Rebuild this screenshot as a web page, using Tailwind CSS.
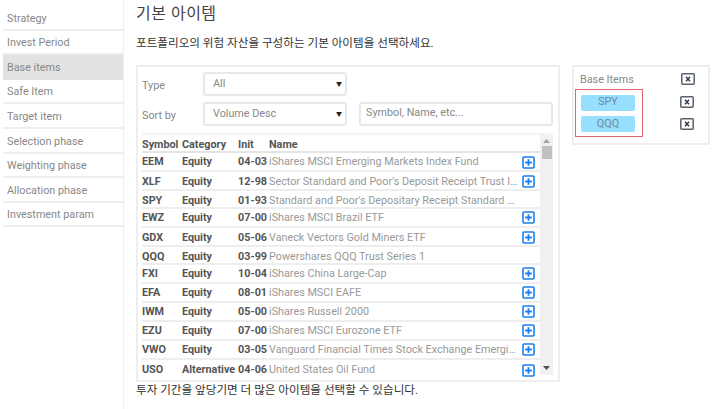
<!DOCTYPE html>
<html lang="ko">
<head>
  <meta charset="UTF-8">
  <title>기본 아이템</title>
  <script src="https://cdn.jsdelivr.net/npm/@tailwindcss/browser@4"></script>
</head>
<body class="bg-white font-['Roboto','Noto_Sans_CJK_KR',sans-serif] text-[10.8px]">
  <div class="flex h-[409px] w-[720px] overflow-hidden">
    <!-- Sidebar -->
    <nav class="ml-[3px] w-[121px] shrink-0 border-r border-[#eeeeee] pt-[6px] text-[#888888]">
      <div class="flex h-[24.6px] items-center border-b-2 border-[#eeeeee] pl-[4px] pt-[3px]">Strategy</div>
      <div class="flex h-[24.6px] items-center border-b-2 border-[#eeeeee] pl-[4px] pt-[3px]">Invest Period</div>
      <div class="flex h-[24.6px] items-center bg-[#e2e2e2] pl-[4px] pt-[2px]">Base items</div>
      <div class="flex h-[24.6px] items-center border-b-2 border-[#eeeeee] pl-[4px] pt-[3px]">Safe Item</div>
      <div class="flex h-[24.6px] items-center border-b-2 border-[#eeeeee] pl-[4px] pt-[3px]">Target item</div>
      <div class="flex h-[24.6px] items-center border-b-2 border-[#eeeeee] pl-[4px] pt-[3px]">Selection phase</div>
      <div class="flex h-[24.6px] items-center border-b-2 border-[#eeeeee] pl-[4px] pt-[3px]">Weighting phase</div>
      <div class="flex h-[24.6px] items-center border-b-2 border-[#eeeeee] pl-[4px] pt-[3px]">Allocation phase</div>
      <div class="flex h-[24.6px] items-center border-b-2 border-[#eeeeee] pl-[4px] pt-[3px]">Investment param</div>
    </nav>

    <!-- Main -->
    <main class="ml-[12px] flex w-[424px] shrink-0 flex-col">
      <h1 class="flex h-[27px] items-center text-[16px] leading-none tracking-[0.5px] text-[#444444]">기본 아이템</h1>
      <p class="mt-[9px] h-[14px] text-[11.6px] leading-[14px] text-[#333333]">포트폴리오의 위험 자산을 구성하는 기본 아이템을 선택하세요.</p>
      <section class="mt-[15px] h-[317px] border-2 border-[#eeeeee] pl-[4px] pr-[5px] pt-[5px]">
        <div class="flex h-[23px] items-center">
          <span class="w-[61px] pt-[5px] text-[#888888]">Type</span>
          <div class="flex h-[24px] w-[144px] items-center justify-between rounded-[3px] border-2 border-[#e8e8e8] pl-[8px] pr-[3px] text-[#888888]">
            <span class="pt-[1px]">All</span>
            <span class="text-[6px] text-[#222222]">▼</span>
          </div>
        </div>
        <div class="mt-[7px] flex h-[23px] items-center">
          <span class="w-[61px] pt-[5px] text-[#888888]">Sort by</span>
          <div class="flex h-[24px] w-[144px] items-center justify-between rounded-[3px] border-2 border-[#e8e8e8] pl-[8px] pr-[3px] text-[#888888]">
            <span class="pt-[1px]">Volume Desc</span>
            <span class="text-[6px] text-[#222222]">▼</span>
          </div>
          <div class="ml-[12px] flex h-[24px] w-[194px] items-center rounded-[3px] border-2 border-[#e8e8e8] pl-[5px] text-[#888888]">Symbol, Name, etc...</div>
        </div>
        <div class="mt-[8px] h-[2px] w-[411px] bg-[#f4f4f4]"></div>
        <div class="flex h-[240px] w-[411px]">
          <div class="w-[398px]">
            <div class="flex h-[18px] items-center border-b-2 border-[#e4e4e4] pt-[4px] font-bold text-[#555555]">
              <span class="w-[40px]">Symbol</span><span class="w-[56px]">Category</span><span class="w-[31px]">Init</span><span>Name</span>
            </div>
            <div class="flex h-[19.1px] items-center border-b-2 border-[#eeeeee] pt-[1px]">
              <span class="w-[40px] font-bold text-[#555555]">EEM</span><span class="w-[56px] font-bold text-[#555555]">Equity</span><span class="w-[31px] font-bold text-[#555555]">04-03</span><span class="w-[250px] truncate text-[#999999]">iShares MSCI Emerging Markets Index Fund</span>
              <svg class="ml-[3px]" width="13" height="13" viewBox="0 0 13 13" fill="none"><rect x="1" y="1" width="11" height="11" rx="1" stroke="#1a7ff0" stroke-width="1.6"/><path d="M3.2 6.5h6.6M6.5 3.2v6.6" stroke="#1a7ff0" stroke-width="1.8"/></svg>
            </div>
            <div class="flex h-[19.1px] items-center border-b-2 border-[#eeeeee] pt-[2px]">
              <span class="w-[40px] font-bold text-[#555555]">XLF</span><span class="w-[56px] font-bold text-[#555555]">Equity</span><span class="w-[31px] font-bold text-[#555555]">12-98</span><span class="w-[250px] truncate text-[#999999]">Sector Standard and Poor's Deposit Receipt Trust Industrial</span>
              <svg class="ml-[3px]" width="13" height="13" viewBox="0 0 13 13" fill="none"><rect x="1" y="1" width="11" height="11" rx="1" stroke="#1a7ff0" stroke-width="1.6"/><path d="M3.2 6.5h6.6M6.5 3.2v6.6" stroke="#1a7ff0" stroke-width="1.8"/></svg>
            </div>
            <div class="flex h-[17.6px] items-center border-b-2 border-[#eeeeee] pt-[4px]">
              <span class="w-[40px] font-bold text-[#555555]">SPY</span><span class="w-[56px] font-bold text-[#555555]">Equity</span><span class="w-[31px] font-bold text-[#555555]">01-93</span><span class="w-[250px] truncate text-[#999999]">Standard and Poor's Depositary Receipt Standard and Poor</span>
            </div>
            <div class="flex h-[19.1px] items-center border-b-2 border-[#eeeeee] pt-[1px]">
              <span class="w-[40px] font-bold text-[#555555]">EWZ</span><span class="w-[56px] font-bold text-[#555555]">Equity</span><span class="w-[31px] font-bold text-[#555555]">07-00</span><span class="w-[250px] truncate text-[#999999]">iShares MSCI Brazil ETF</span>
              <svg class="ml-[3px]" width="13" height="13" viewBox="0 0 13 13" fill="none"><rect x="1" y="1" width="11" height="11" rx="1" stroke="#1a7ff0" stroke-width="1.6"/><path d="M3.2 6.5h6.6M6.5 3.2v6.6" stroke="#1a7ff0" stroke-width="1.8"/></svg>
            </div>
            <div class="flex h-[19.1px] items-center border-b-2 border-[#eeeeee] pt-[3px]">
              <span class="w-[40px] font-bold text-[#555555]">GDX</span><span class="w-[56px] font-bold text-[#555555]">Equity</span><span class="w-[31px] font-bold text-[#555555]">05-06</span><span class="w-[250px] truncate text-[#999999]">Vaneck Vectors Gold Miners ETF</span>
              <svg class="ml-[3px]" width="13" height="13" viewBox="0 0 13 13" fill="none"><rect x="1" y="1" width="11" height="11" rx="1" stroke="#1a7ff0" stroke-width="1.6"/><path d="M3.2 6.5h6.6M6.5 3.2v6.6" stroke="#1a7ff0" stroke-width="1.8"/></svg>
            </div>
            <div class="flex h-[17.6px] items-center border-b-2 border-[#eeeeee] pt-[4px]">
              <span class="w-[40px] font-bold text-[#555555]">QQQ</span><span class="w-[56px] font-bold text-[#555555]">Equity</span><span class="w-[31px] font-bold text-[#555555]">03-99</span><span class="w-[250px] truncate text-[#999999]">Powershares QQQ Trust Series 1</span>
            </div>
            <div class="flex h-[19.1px] items-center border-b-2 border-[#eeeeee] pt-[1px]">
              <span class="w-[40px] font-bold text-[#555555]">FXI</span><span class="w-[56px] font-bold text-[#555555]">Equity</span><span class="w-[31px] font-bold text-[#555555]">10-04</span><span class="w-[250px] truncate text-[#999999]">iShares China Large-Cap</span>
              <svg class="ml-[3px]" width="13" height="13" viewBox="0 0 13 13" fill="none"><rect x="1" y="1" width="11" height="11" rx="1" stroke="#1a7ff0" stroke-width="1.6"/><path d="M3.2 6.5h6.6M6.5 3.2v6.6" stroke="#1a7ff0" stroke-width="1.8"/></svg>
            </div>
            <div class="flex h-[19.1px] items-center border-b-2 border-[#eeeeee] pt-[1px]">
              <span class="w-[40px] font-bold text-[#555555]">EFA</span><span class="w-[56px] font-bold text-[#555555]">Equity</span><span class="w-[31px] font-bold text-[#555555]">08-01</span><span class="w-[250px] truncate text-[#999999]">iShares MSCI EAFE</span>
              <svg class="ml-[3px]" width="13" height="13" viewBox="0 0 13 13" fill="none"><rect x="1" y="1" width="11" height="11" rx="1" stroke="#1a7ff0" stroke-width="1.6"/><path d="M3.2 6.5h6.6M6.5 3.2v6.6" stroke="#1a7ff0" stroke-width="1.8"/></svg>
            </div>
            <div class="flex h-[19.1px] items-center border-b-2 border-[#eeeeee] pt-[1px]">
              <span class="w-[40px] font-bold text-[#555555]">IWM</span><span class="w-[56px] font-bold text-[#555555]">Equity</span><span class="w-[31px] font-bold text-[#555555]">05-00</span><span class="w-[250px] truncate text-[#999999]">iShares Russell 2000</span>
              <svg class="ml-[3px]" width="13" height="13" viewBox="0 0 13 13" fill="none"><rect x="1" y="1" width="11" height="11" rx="1" stroke="#1a7ff0" stroke-width="1.6"/><path d="M3.2 6.5h6.6M6.5 3.2v6.6" stroke="#1a7ff0" stroke-width="1.8"/></svg>
            </div>
            <div class="flex h-[19.1px] items-center border-b-2 border-[#eeeeee] pt-[1px]">
              <span class="w-[40px] font-bold text-[#555555]">EZU</span><span class="w-[56px] font-bold text-[#555555]">Equity</span><span class="w-[31px] font-bold text-[#555555]">07-00</span><span class="w-[250px] truncate text-[#999999]">iShares MSCI Eurozone ETF</span>
              <svg class="ml-[3px]" width="13" height="13" viewBox="0 0 13 13" fill="none"><rect x="1" y="1" width="11" height="11" rx="1" stroke="#1a7ff0" stroke-width="1.6"/><path d="M3.2 6.5h6.6M6.5 3.2v6.6" stroke="#1a7ff0" stroke-width="1.8"/></svg>
            </div>
            <div class="flex h-[19.1px] items-center border-b-2 border-[#eeeeee] pt-[1px]">
              <span class="w-[40px] font-bold text-[#555555]">VWO</span><span class="w-[56px] font-bold text-[#555555]">Equity</span><span class="w-[31px] font-bold text-[#555555]">03-05</span><span class="w-[250px] truncate text-[#999999]">Vanguard Financial Times Stock Exchange Emerging Markets</span>
              <svg class="ml-[3px]" width="13" height="13" viewBox="0 0 13 13" fill="none"><rect x="1" y="1" width="11" height="11" rx="1" stroke="#1a7ff0" stroke-width="1.6"/><path d="M3.2 6.5h6.6M6.5 3.2v6.6" stroke="#1a7ff0" stroke-width="1.8"/></svg>
            </div>
            <div class="flex h-[19.1px] items-center pt-[1px]">
              <span class="w-[40px] font-bold text-[#555555]">USO</span><span class="w-[56px] whitespace-nowrap font-bold text-[#555555]">Alternative</span><span class="w-[31px] font-bold text-[#555555]">04-06</span><span class="w-[250px] truncate text-[#999999]">United States Oil Fund</span>
              <svg class="ml-[3px]" width="13" height="13" viewBox="0 0 13 13" fill="none"><rect x="1" y="1" width="11" height="11" rx="1" stroke="#1a7ff0" stroke-width="1.6"/><path d="M3.2 6.5h6.6M6.5 3.2v6.6" stroke="#1a7ff0" stroke-width="1.8"/></svg>
            </div>
          </div>
          <!-- scrollbar -->
          <div class="flex w-[13px] flex-col items-center bg-[#f1f1f1]">
            <svg class="mt-[4px]" width="7" height="4" viewBox="0 0 7 4"><path d="M3.5 0L7 4H0z" fill="#a3a3a3"/></svg>
            <div class="mt-[3px] h-[13px] w-[10px] bg-[#c1c1c1]"></div>
            <svg class="mt-auto mb-[5px]" width="7" height="4" viewBox="0 0 7 4"><path d="M0 0h7L3.5 4z" fill="#505050"/></svg>
          </div>
        </div>
      </section>
      <p class="h-[14px] pt-[1px] text-[11.6px] leading-[14px] text-[#333333]">투자 기간을 앞당기면 더 많은 아이템을 선택할 수 있습니다.</p>
    </main>

    <!-- Base items -->
    <aside class="ml-[12px] mt-[65px] h-[80px] w-[138px] shrink-0 border-2 border-[#eeeeee] pl-[1px] pt-[2px] text-[#888888]">
      <div class="flex h-[20px] items-center justify-between pr-[13px] pl-[5px]">
        <span class="pt-[2px]">Base Items</span>
        <svg width="14" height="12" viewBox="0 0 14 12" fill="none"><rect x="0.8" y="0.8" width="12.4" height="10.4" rx="1" stroke="#56616d" stroke-width="1.5"/><path d="M5 3.8l4 4.4M9 3.8L5 8.2" stroke="#333a42" stroke-width="1.5"/></svg>
      </div>
      <div class="flex">
        <div class="h-[48px] w-[68px] border-[1.5px] border-[#e0656b] px-[5px] pt-[4.5px]">
          <div class="flex h-[16px] w-[54px] items-center justify-center rounded-[2px] bg-[#96dfff] text-[#6f8a9a]">SPY</div>
          <div class="mt-[5px] flex h-[16px] w-[54px] items-center justify-center rounded-[2px] bg-[#96dfff] pt-[1px] text-[#6f8a9a]">QQQ</div>
        </div>
        <div class="ml-[37px] flex flex-col gap-[10px] pt-[7px]">
          <svg width="14" height="12" viewBox="0 0 14 12" fill="none"><rect x="0.8" y="0.8" width="12.4" height="10.4" rx="1" stroke="#56616d" stroke-width="1.5"/><path d="M5 3.8l4 4.4M9 3.8L5 8.2" stroke="#333a42" stroke-width="1.5"/></svg>
          <svg width="14" height="12" viewBox="0 0 14 12" fill="none"><rect x="0.8" y="0.8" width="12.4" height="10.4" rx="1" stroke="#56616d" stroke-width="1.5"/><path d="M5 3.8l4 4.4M9 3.8L5 8.2" stroke="#333a42" stroke-width="1.5"/></svg>
        </div>
      </div>
    </aside>
  </div>
</body>
</html>
